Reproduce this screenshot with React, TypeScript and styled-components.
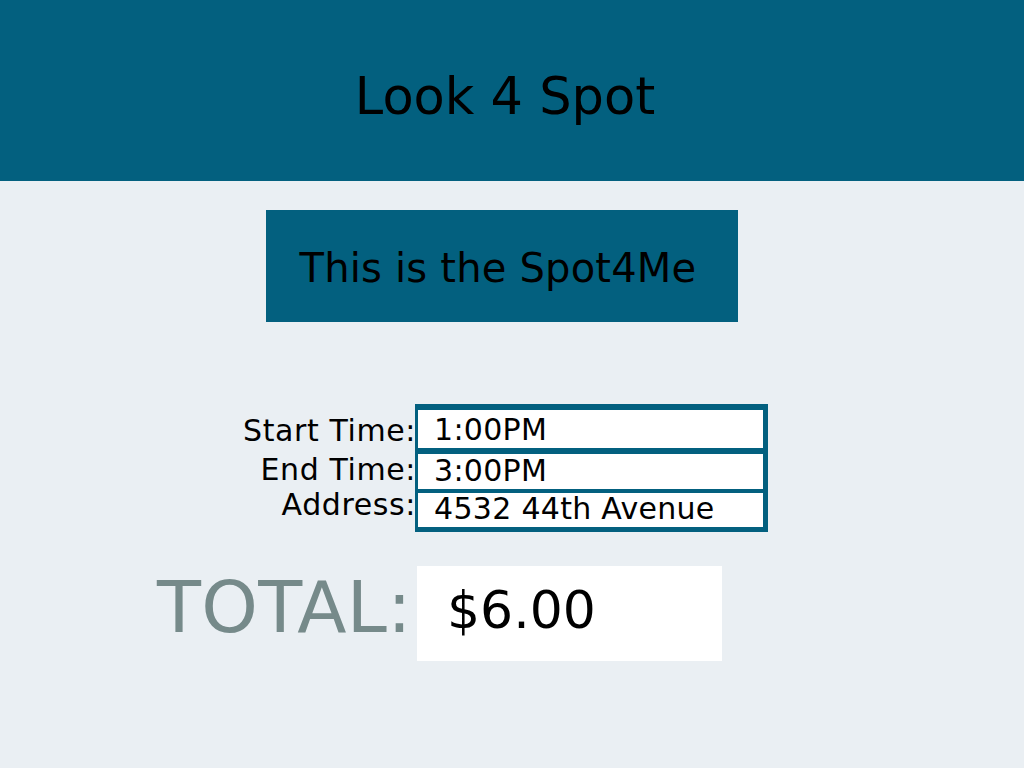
import React from "react";
import styled, { createGlobalStyle } from "styled-components";

const GlobalStyle = createGlobalStyle`
  html, body {
    margin: 0;
    padding: 0;
    background: #eaeff3;
  }
  body {
    font-family: "DejaVu Sans", Verdana, sans-serif;
    color: #000;
  }
  * { box-sizing: border-box; }
`;

const Page = styled.div`
  width: 1024px;
  min-height: 768px;
  background: #eaeff3;
`;

const Header = styled.header`
  height: 181px;
  background: #03607f;
  padding: 67px 14px 0 0;
`;

const Title = styled.h1`
  margin: 0;
  font-size: 51px;
  font-weight: normal;
  line-height: normal;
  text-align: center;
`;

const Main = styled.main`
  padding-top: 29px;
`;

const SpotBox = styled.div`
  margin-left: 266px;
  width: 472px;
  height: 112px;
  background: #03607f;
  padding: 35px 8px 0 0;
  font-size: 40px;
  letter-spacing: 0.2px;
  line-height: normal;
  text-align: center;
`;

const FormGrid = styled.div`
  display: grid;
  grid-template-columns: 415px 353px;
  align-items: start;
  margin-top: 82px;
`;

const LabelColumn = styled.div`
  justify-self: end;
  margin-right: -1px;
  padding-top: 9px;
  display: flex;
  flex-direction: column;
  align-items: flex-end;
`;

const Label = styled.div<{ $space: number }>`
  font-size: 30px;
  line-height: 35px;
  letter-spacing: 0.6px;
  margin-top: ${(p) => p.$space}px;
  white-space: nowrap;
`;

const FieldBox = styled.div`
  background: #03607f;
  padding: 6px 5px 5px 3px;
  display: flex;
  flex-direction: column;
`;

const FieldRow = styled.div<{ $h: number; $space: number }>`
  height: ${(p) => p.$h}px;
  margin-top: ${(p) => p.$space}px;
  background: #ffffff;
  display: flex;
  align-items: flex-end;
  padding: 0 0 3px 16px;
  font-size: 30px;
  line-height: 30px;
  letter-spacing: 0.3px;
  white-space: nowrap;
`;

const TotalRow = styled.div`
  display: grid;
  grid-template-columns: 415px auto;
  align-items: start;
  margin-top: 34px;
`;

const TotalLabel = styled.div`
  justify-self: end;
  margin: -1px 3px 0 0;
  font-size: 72px;
  letter-spacing: 0.4px;
  line-height: normal;
  color: #768a8a;
  white-space: nowrap;
`;

const TotalBox = styled.div`
  margin-left: 2px;
  width: 305px;
  height: 95px;
  background: #ffffff;
  padding: 14px 0 0 30px;
  font-size: 52px;
  line-height: normal;
`;

const labels = [
  { text: "Start Time:", space: 0 },
  { text: "End Time:", space: 4 },
  { text: "Address:", space: 0 },
];

const fields = [
  { text: "1:00PM", h: 38, space: 0 },
  { text: "3:00PM", h: 35, space: 6 },
  { text: "4532 44th Avenue", h: 34, space: 4 },
];

export default function App() {
  return (
    <Page>
      <GlobalStyle />
      <Header>
        <Title>Look 4 Spot</Title>
      </Header>
      <Main>
        <SpotBox>This is the Spot4Me</SpotBox>
        <FormGrid>
          <LabelColumn>
            {labels.map((l) => (
              <Label key={l.text} $space={l.space}>
                {l.text}
              </Label>
            ))}
          </LabelColumn>
          <FieldBox>
            {fields.map((f) => (
              <FieldRow key={f.text} $h={f.h} $space={f.space}>
                {f.text}
              </FieldRow>
            ))}
          </FieldBox>
        </FormGrid>
        <TotalRow>
          <TotalLabel>TOTAL:</TotalLabel>
          <TotalBox>$6.00</TotalBox>
        </TotalRow>
      </Main>
    </Page>
  );
}
